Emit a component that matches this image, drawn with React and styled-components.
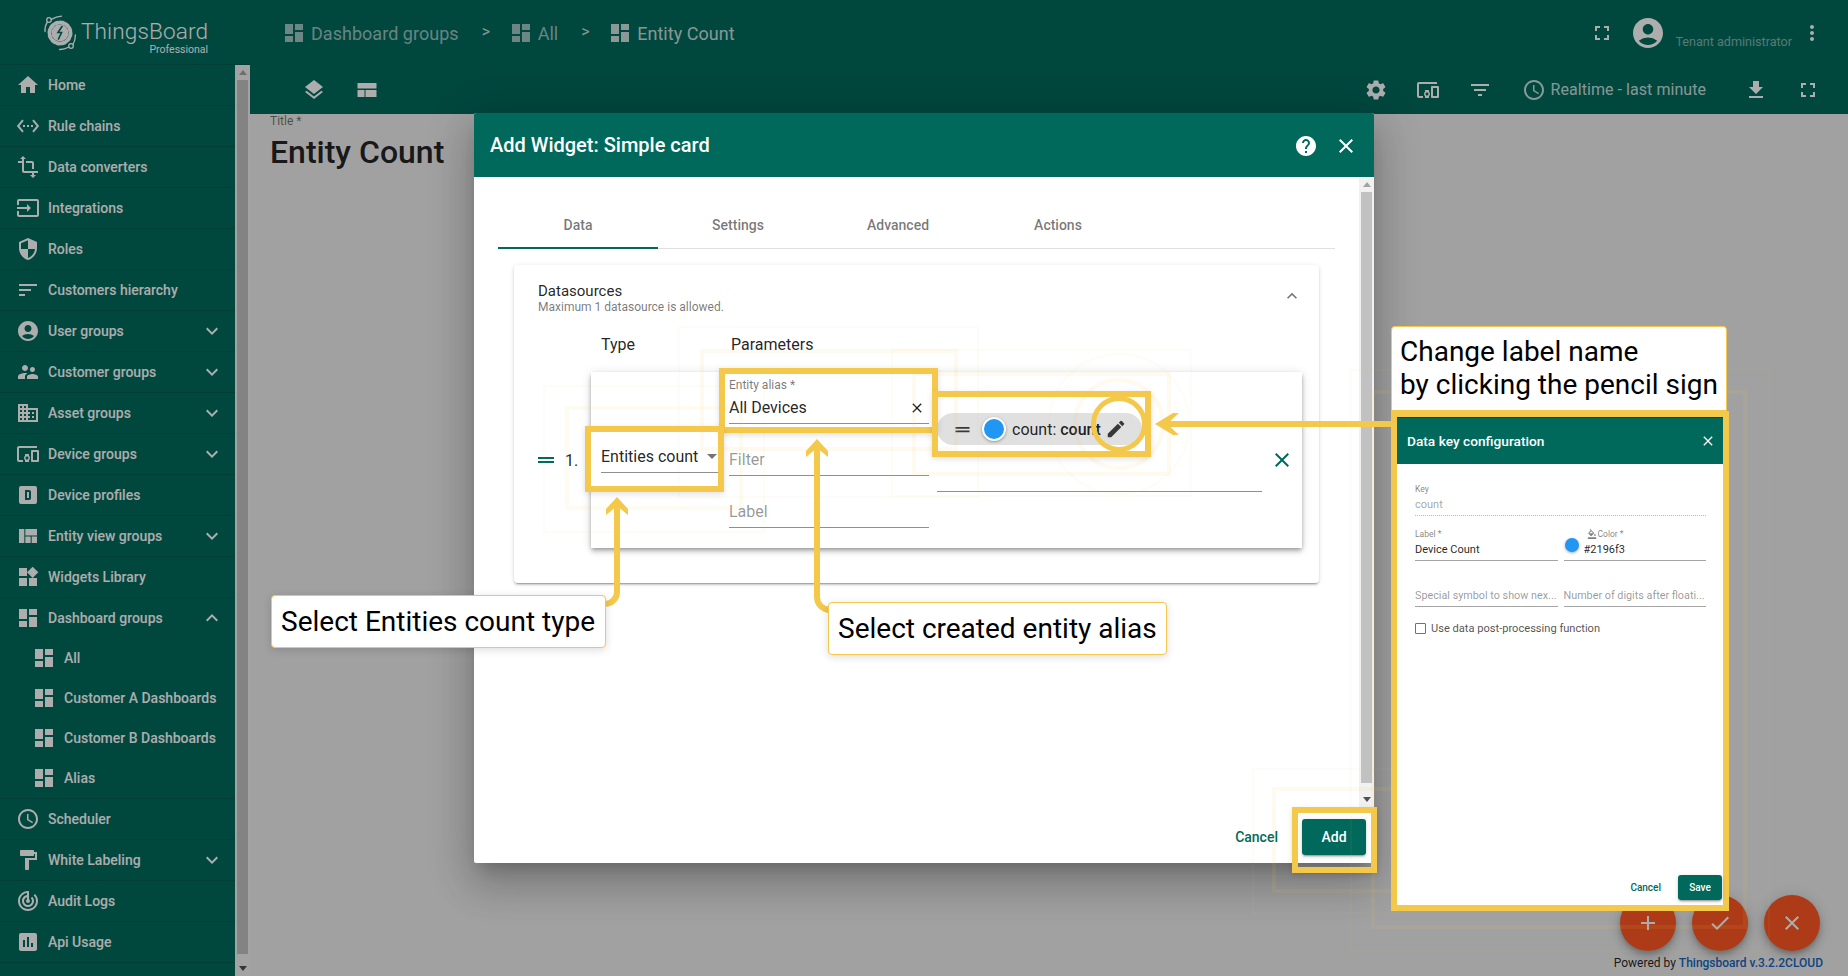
import React from "react";
import styled, { createGlobalStyle } from "styled-components";
import {
  MdHome, MdSettingsEthernet, MdTransform, MdInput, MdSecurity, MdSort, MdAccountCircle, MdSupervisorAccount,
  MdDomain, MdDevicesOther, MdViewQuilt, MdWidgets, MdDashboard, MdAccessTime, MdFormatPaint, MdTrackChanges,
  MdInsertChart, MdExpandMore, MdExpandLess, MdLayers, MdSettings, MdFilterList, MdFileDownload, MdFullscreen,
  MdMoreVert, MdHelp, MdClose, MdDragHandle, MdEdit, MdArrowDropDown, MdAdd, MdCheck, MdFormatColorFill,
} from "react-icons/md";

const TEAL = "#00695c";
const YELLOW = "#f4c84b";

const Global = createGlobalStyle`
  html, body { margin: 0; padding: 0; height: 976px; overflow: hidden; background: #eee; }
  body { font-family: Roboto, "Liberation Sans", sans-serif; color: rgba(0,0,0,.87); }
  * { box-sizing: border-box; }
`;

const Page = styled.div`
  position: relative; display: flex; width: 1848px; height: 976px; overflow: hidden; background: #eeeeee;
`;

/* ---------- sidebar ---------- */
const Sidebar = styled.aside`
  display: flex; flex-direction: column; width: 250px; flex: none; background: ${TEAL};
`;
const LogoBar = styled.div`
  display: flex; height: 65px; flex: none; padding: 10px 0 0 36px; border-bottom: 1px solid rgba(0,0,0,.12);
`;
const LogoText = styled.div`
  display: flex; flex-direction: column; align-items: flex-end; margin-left: -1px; color: #fff;
`;
const LogoName = styled.span`
  font-size: 22.6px; font-weight: 300; line-height: 28px; margin-top: 8px; letter-spacing: .1px;
`;
const LogoSub = styled.span`
  font-size: 10.5px; font-weight: 400; line-height: 11px; margin-top: -2px;
`;
const SideBody = styled.div`
  display: flex; flex: 1; min-height: 0;
`;
const Nav = styled.nav`
  display: flex; flex-direction: column; flex: 1; min-width: 0;
`;
const NavRow = styled.div`
  display: flex; align-items: center; flex: none; height: ${p => (p.$open ? 40 : 41)}px; padding: 0 11px 0 16px; color: #fff;
  font-size: 14px; font-weight: 500; border-bottom: ${p => (p.$open ? "none" : "1px solid rgba(0,0,0,.12)")};
  svg { flex: none; }
`;
const NavLabel = styled.span`
  margin-left: 8px; flex: 1; white-space: nowrap;
`;
const SubRow = styled.div`
  display: flex; align-items: center; flex: none; height: 40px; padding-left: 32px; color: #fff;
  font-size: 14px; font-weight: 500; white-space: nowrap;
`;
const SubGroup = styled.div`
  display: flex; flex-direction: column; border-bottom: 1px solid rgba(0,0,0,.12);
`;
const Scrollbar = styled.div`
  display: flex; flex-direction: column; width: ${p => p.$w || 15}px; flex: none; background: #f1f1f1;
`;
const ScrollArrow = styled.div`
  display: flex; align-items: center; justify-content: center; height: 15px; flex: none;
  &::before {
    content: ""; width: 0; height: 0; border-left: 4px solid transparent; border-right: 4px solid transparent;
    ${p => (p.$down ? "border-top: 5px solid #505050;" : "border-bottom: 5px solid #a3a3a3;")}
  }
`;
const ScrollThumb = styled.div`
  flex: 1; margin: 0 2px ${p => p.$gap}px; background: #c1c1c1;
`;

/* ---------- main ---------- */
const Main = styled.main`
  display: flex; flex-direction: column; flex: 1; min-width: 0;
`;
const TopBar = styled.header`
  display: flex; flex-direction: column; height: 114px; flex: none; background: ${TEAL}; color: #fff;
`;
const TopRow = styled.div`
  display: flex; align-items: center; height: 64px; flex: none; padding: 2px 24px 0 32px;
`;
const SubBar = styled.div`
  display: flex; align-items: center; height: 50px; flex: none; padding: 1px 28px 0 52px;
`;
const Crumb = styled.div`
  display: flex; align-items: center; font-size: 18px; gap: 5px; letter-spacing: .03px;
  color: rgba(255,255,255,${p => (p.$current ? ".8" : ".62")}); white-space: nowrap;
`;
const CrumbSep = styled.span`
  font-size: 16px; width: 50px; padding-left: 23px; margin-top: -3px; color: rgba(255,255,255,.8);
`;
const Spacer = styled.div`
  flex: 1;
`;
const TenantName = styled.span`
  font-size: 12.6px; margin: 17px 8px 0 9px; color: rgba(255,255,255,.5); white-space: nowrap;
`;
const IconGap = styled.div`
  display: flex; align-items: center; gap: ${p => p.$gap}px; margin: ${p => p.$top || 0}px 0 0 ${p => p.$left || 0}px;
`;
const Realtime = styled.div`
  display: flex; align-items: center; gap: 5px; font-size: 16px; letter-spacing: .05px; color: rgba(255,255,255,.8); white-space: nowrap;
  margin: 0 38px 0 30px;
`;
const Content = styled.section`
  flex: 1; padding: 0 20px; position: relative;
`;
const TitleLabel = styled.div`
  font-size: 12px; line-height: 14px; color: rgba(0,0,0,.54);
`;
const TitleValue = styled.div`
  font-size: 32px; font-weight: 500; line-height: 38px; margin-top: 5px;
`;
const FabRow = styled.div`
  position: absolute; right: 28px; top: 781px; display: flex; gap: 16px;
`;
const Fab = styled.div`
  display: flex; align-items: center; justify-content: center; width: 56px; height: 56px; border-radius: 50%;
  background: #ff5722; color: #fff; box-shadow: 0 3px 5px -1px rgba(0,0,0,.2), 0 6px 10px rgba(0,0,0,.14), 0 1px 18px rgba(0,0,0,.12);
`;
const Powered = styled.div`
  position: absolute; right: 25px; top: 842px; font-size: 12px; white-space: nowrap;
`;
const PoweredLink = styled.span`
  color: #1565c0; font-weight: 500;
`;
const Backdrop = styled.div`
  position: absolute; inset: 0; background: rgba(0,0,0,.32);
`;

/* ---------- widget dialog ---------- */
const Modal = styled.div`
  position: absolute; left: 474px; top: 113px; width: 900px; height: 750px; display: flex; flex-direction: column;
  background: #fff; border-radius: 2px;
  box-shadow: 0 11px 15px -7px rgba(0,0,0,.2), 0 24px 38px 3px rgba(0,0,0,.14), 0 9px 46px 8px rgba(0,0,0,.12);
`;
const ModalHead = styled.div`
  display: flex; align-items: center; height: 64px; flex: none; padding: 0 16px; background: ${TEAL}; color: #fff;
  border-radius: 2px 2px 0 0;
`;
const ModalTitle = styled.h2`
  margin: 0; font-size: 20px; font-weight: 500; flex: 1;
`;
const ModalMiddle = styled.div`
  display: flex; height: 630px; flex: none;
`;
const ModalBody = styled.div`
  flex: 1; min-width: 0; padding: 24px 24px 0;
`;
const Tabs = styled.div`
  display: flex; height: 48px; border-bottom: 1px solid #e0e0e0;
`;
const Tab = styled.div`
  display: flex; align-items: center; justify-content: center; width: 160px; height: 48px; font-size: 14px; font-weight: 500;
  color: rgba(0,0,0,.54); box-shadow: ${p => (p.$active ? `inset 0 -2px 0 ${TEAL}` : "none")};
`;
const Card = styled.div`
  position: relative; height: 318px; margin: 16px 16px 0; padding: 17px 17px 0 24px; border-radius: 4px;
  box-shadow: 0 3px 1px -2px rgba(0,0,0,.2), 0 2px 2px rgba(0,0,0,.14), 0 1px 5px rgba(0,0,0,.12);
`;
const CardHead = styled.div`
  display: flex; justify-content: space-between;
`;
const CardTitle = styled.div`
  font-size: 15px; line-height: 18px;
`;
const CardSub = styled.div`
  font-size: 12px; line-height: 14px; color: rgba(0,0,0,.54);
`;
const Collapse = styled.div`
  color: rgba(0,0,0,.54); margin: 4px 0 0 0; height: 20px;
`;
const ColHeads = styled.div`
  display: flex; font-size: 16px; line-height: 20px; margin-top: 21px; padding-left: 63px;
`;
const ColHead = styled.div`
  width: ${p => p.$w}px;
`;
const SourceLine = styled.div`
  display: flex; align-items: center; margin-top: 17px;
`;
const Handle = styled.div`
  display: flex; width: 31px; margin-left: -4px; color: ${TEAL}; flex: none;
`;
const SourceIndex = styled.div`
  font-size: 16px; width: 26px; flex: none;
`;
const SourceCard = styled.div`
  display: flex; align-items: flex-start; height: 176px; flex: 1; min-width: 0; padding: 0 8px 0 10px; position: relative;
  box-shadow: 0 2px 4px -1px rgba(0,0,0,.3), 0 4px 5px rgba(0,0,0,.14), 0 1px 10px rgba(0,0,0,.12);
`;
const TypeCol = styled.div`
  width: 117px; flex: none; margin: 49px 11px 0 0;
`;
const ParamCol = styled.div`
  width: 200px; flex: none; display: flex; flex-direction: column;
`;
const Field = styled.div`
  position: relative; height: 52px; display: flex; flex-direction: column; justify-content: flex-end;
  border-bottom: 1px solid #8f8f8f; padding-bottom: 4px; font-size: 16px; line-height: 22px;
`;
const FieldLabel = styled.div`
  font-size: 12px; line-height: 14px; color: rgba(0,0,0,.54); margin-bottom: 5px;
`;
const Placeholder = styled.div`
  color: rgba(0,0,0,.42);
`;
const SelectCaret = styled.div`
  position: absolute; right: -6px; top: 23px; display: flex; color: rgba(0,0,0,.54);
`;
const FieldClear = styled.div`
  position: absolute; right: 4px; top: 28px; display: flex;
`;
const KeysCol = styled.div`
  width: 325px; height: 120px; margin-left: 8px; flex: none; border-bottom: 1px solid #8f8f8f; padding-top: 41px;
`;
const Chip = styled.div`
  display: flex; align-items: center; width: 205px; height: 32px; border-radius: 16px; background: #e0e0e0; padding-left: 15px;
  color: rgba(0,0,0,.87); font-size: 16px; white-space: nowrap;
  svg { flex: none; }
`;
const ColorDot = styled.div`
  width: ${p => p.$s}px; height: ${p => p.$s}px; border-radius: 50%; background: #2196f3; flex: none;
  border: ${p => p.$b}px solid #fff; box-shadow: 0 1px 3px rgba(0,0,0,.35);
`;
const ChipDot = styled(ColorDot)`
  margin-left: 9px;
`;
const ChipText = styled.span`
  margin-left: 6px; width: 93px;
  b { font-weight: 500; }
`;
const RemoveBtn = styled.div`
  display: flex; align-items: center; height: 100%; margin-left: 8px; color: ${TEAL}; align-self: center;
`;
const ModalFoot = styled.div`
  display: flex; align-items: center; justify-content: flex-end; flex: 1; padding: 4px 8px 0 0; gap: 24px;
`;
const TextBtn = styled.div`
  color: ${TEAL}; font-size: ${p => p.$fs}px; font-weight: 500;
`;
const RaisedBtn = styled.div`
  display: flex; align-items: center; justify-content: center; width: ${p => p.$w}px; height: ${p => p.$h}px; border-radius: 3px;
  background: ${TEAL}; color: #fff; font-size: ${p => p.$fs}px; font-weight: 500;
  box-shadow: 0 3px 1px -2px rgba(0,0,0,.2), 0 2px 2px rgba(0,0,0,.14), 0 1px 5px rgba(0,0,0,.12);
`;

/* ---------- annotations ---------- */
const Highlight = styled.div`
  position: absolute; left: ${p => p.$x}px; top: ${p => p.$y}px; width: ${p => p.$w}px; height: ${p => p.$h}px;
  border: 6px solid ${YELLOW}; box-shadow: 0 2px 6px rgba(0,0,0,.12);
`;
const Ring = styled.div`
  position: absolute; left: 1091px; top: 396px; width: 56px; height: 56px; border-radius: 50%; border: 5px solid ${YELLOW};
`;
const Ghost = styled.div`
  position: absolute; left: ${p => p.$x}px; top: ${p => p.$y}px; width: ${p => p.$w}px; height: ${p => p.$h}px;
  border: ${p => p.$t}px solid ${YELLOW}; opacity: ${p => p.$o}; border-radius: ${p => (p.$round ? "50%" : "0")};
`;
const Callout = styled.div`
  position: absolute; left: ${p => p.$x}px; top: ${p => p.$y}px; width: ${p => p.$w}px; height: 53px; display: flex; align-items: center;
  padding-left: 9px; background: #fff; border: 1px solid ${YELLOW}; border-radius: 4px; font-size: 28px; color: #000; white-space: nowrap;
  box-shadow: 0 2px 8px rgba(0,0,0,.14);
`;
const Arrows = styled.svg`
  position: absolute; left: 0; top: 0; width: 1848px; height: 976px; pointer-events: none;
`;
const RightPanel = styled.div`
  position: absolute; left: 1391px; top: 326px; width: 338px; display: flex; flex-direction: column;
`;
const PanelNote = styled.div`
  width: 336px; height: 85px; padding: 8px 8px 0; background: #fff; border: 1px solid ${YELLOW}; border-radius: 4px 4px 0 0;
  font-size: 28px; line-height: 33px; color: #000; white-space: nowrap;
`;
const PanelFrame = styled.div`
  height: 500px; border: 6px solid ${YELLOW}; background: #fff; display: flex; flex-direction: column;
`;
const KeyHead = styled.div`
  display: flex; align-items: center; justify-content: space-between; height: 47px; flex: none; padding: 0 7px 0 10px;
  background: ${TEAL}; color: #fff; font-size: 13.7px; font-weight: 500; border-top: 1px solid #00493f;
`;
const KeyBody = styled.div`
  display: flex; flex-direction: column; flex: 1; padding: 0 17px 0 18px;
`;
const MiniField = styled.div`
  position: relative; flex: none; min-width: 0; height: ${p => p.$h}px; display: flex; flex-direction: column; justify-content: flex-end;
  padding-bottom: 3px; font-size: 11px; line-height: 14px; border-bottom: 1px ${p => (p.$dotted ? "dotted #b8b8b8" : "solid #a5a5a5")};
  color: ${p => (p.$muted ? "rgba(0,0,0,.38)" : "rgba(0,0,0,.87)")}; white-space: nowrap;
`;
const MiniLabel = styled.div`
  font-size: 8.5px; line-height: 10px; color: rgba(0,0,0,.5); margin-bottom: 4px; display: flex; align-items: center; gap: 1px;
  padding-left: ${p => p.$indent || 0}px;
`;
const MiniHint = styled.div`
  font-size: 10.8px; color: rgba(0,0,0,.42);
`;
const MiniRow = styled.div`
  display: flex; gap: 6px;
  & > * { flex: 1; }
`;
const ColorValue = styled.div`
  padding-left: 20px;
`;
const ColorFieldDot = styled.div`
  position: absolute; left: 1px; top: 22px;
`;
const CheckRow = styled.div`
  display: flex; align-items: center; gap: 5px; margin-top: 15px; font-size: 11.1px; color: rgba(0,0,0,.7); white-space: nowrap;
`;
const CheckBox = styled.div`
  width: 11px; height: 11px; border: 1px solid rgba(0,0,0,.55); border-radius: 1px; flex: none;
`;
const KeyFoot = styled.div`
  display: flex; align-items: center; justify-content: flex-end; gap: 17px; margin: auto -16px 5px 0;
`;

/* ---------- drawings ---------- */
const Logo = () => (
  <svg width="46" height="46" viewBox="0 0 46 46" fill="none" stroke="#fff" strokeLinecap="round">
    <circle cx="24" cy="23" r="10.5" stroke="#fff" strokeWidth="4" strokeDasharray="3 2.5" />
    <circle cx="24" cy="23" r="8.5" fill="#fff" stroke="none" />
    <path d="M26 16.5l-4 6h3.5l-3 6.5" stroke={TEAL} strokeWidth="1.6" />
    <circle cx="13" cy="10" r="2.3" strokeWidth="1.3" />
    <path d="M15.3 9.4C19 7.5 22 6.6 25.5 6.2M11.4 11.8C9.7 14.5 8.7 18 9 21.5" strokeWidth="1.3" />
    <circle cx="35" cy="36" r="2.3" strokeWidth="1.3" />
    <path d="M32.8 37C29.5 39 27 39.6 23.5 39.5M37 34.5C38.6 31.7 39.4 29 39.4 25" strokeWidth="1.3" />
  </svg>
);
const DeviceProfileIcon = () => (
  <svg width="24" height="24" viewBox="0 0 24 24" fill="currentColor">
    <path fillRule="evenodd" d="M5 3h14a2 2 0 0 1 2 2v14a2 2 0 0 1-2 2H5a2 2 0 0 1-2-2V5a2 2 0 0 1 2-2zm4 4v10h4a2 2 0 0 0 2-2V9a2 2 0 0 0-2-2H9zm2 2h2v6h-2V9z" />
  </svg>
);
const WebBlocks = () => (
  <svg width="24" height="24" viewBox="0 0 24 24" fill="#fff">
    <path d="M2.5 5h19v5.6h-19zM2.5 12h7v7h-7zM10.5 12h11v7h-11z" />
  </svg>
);

const menuA = [
  [MdHome, "Home"], [MdSettingsEthernet, "Rule chains"], [MdTransform, "Data converters"], [MdInput, "Integrations"],
  [MdSecurity, "Roles"], [MdSort, "Customers hierarchy"], [MdAccountCircle, "User groups", 1], [MdSupervisorAccount, "Customer groups", 1],
  [MdDomain, "Asset groups", 1], [MdDevicesOther, "Device groups", 1], [DeviceProfileIcon, "Device profiles"],
  [MdViewQuilt, "Entity view groups", 1], [MdWidgets, "Widgets Library"],
];
const menuB = [
  [MdAccessTime, "Scheduler"], [MdFormatPaint, "White Labeling", 1], [MdTrackChanges, "Audit Logs"], [MdInsertChart, "Api Usage"],
];
const subItems = ["All", "Customer A Dashboards", "Customer B Dashboards", "Alias"];

const ghosts = [
  [543, 385, 222, 148, 2, .05], [565, 406, 178, 104, 4, .08],
  [700, 349, 258, 102, 4, .09], [678, 326, 301, 172, 2, .05],
  [912, 372, 259, 104, 4, .09], [891, 349, 301, 148, 2, .05],
  [1272, 787, 125, 106, 4, .09], [1252, 768, 150, 146, 2, .05],
  [1371, 390, 376, 539, 4, .09], [1350, 369, 420, 583, 2, .05],
];

function Row({ icon: Icon, label, more }) {
  return (
    <NavRow>
      <Icon size={24} />
      <NavLabel>{label}</NavLabel>
      {more ? <MdExpandMore size={24} /> : null}
    </NavRow>
  );
}

export default function App() {
  return (
    <Page>
      <Global />
      <Sidebar>
        <LogoBar>
          <Logo />
          <LogoText>
            <LogoName>ThingsBoard</LogoName>
            <LogoSub>Professional</LogoSub>
          </LogoText>
        </LogoBar>
        <SideBody>
          <Nav>
            {menuA.map(([i, l, m]) => <Row key={l} icon={i} label={l} more={m} />)}
            <NavRow $open>
              <MdDashboard size={24} />
              <NavLabel>Dashboard groups</NavLabel>
              <MdExpandLess size={24} />
            </NavRow>
            <SubGroup>
              {subItems.map(s => (
                <SubRow key={s}>
                  <MdDashboard size={24} />
                  <NavLabel>{s}</NavLabel>
                </SubRow>
              ))}
            </SubGroup>
            {menuB.map(([i, l, m]) => <Row key={l} icon={i} label={l} more={m} />)}
          </Nav>
          <Scrollbar>
            <ScrollArrow />
            <ScrollThumb $gap={7} />
            <ScrollArrow $down />
          </Scrollbar>
        </SideBody>
      </Sidebar>

      <Main>
        <TopBar>
          <TopRow>
            <Crumb><MdDashboard size={24} />Dashboard groups</Crumb>
            <CrumbSep>&gt;</CrumbSep>
            <Crumb><MdDashboard size={24} />All</Crumb>
            <CrumbSep>&gt;</CrumbSep>
            <Crumb $current><MdDashboard size={24} />Entity Count</Crumb>
            <Spacer />
            <MdFullscreen size={24} />
            <IconGap $gap={0} $left={16}>
              <MdAccountCircle size={36} />
              <TenantName>Tenant administrator</TenantName>
            </IconGap>
            <MdMoreVert size={24} />
          </TopRow>
          <SubBar>
            <IconGap $gap={29}>
              <MdLayers size={24} />
              <WebBlocks />
            </IconGap>
            <Spacer />
            <IconGap $gap={28}>
              <MdSettings size={24} />
              <MdDevicesOther size={24} />
              <MdFilterList size={24} />
            </IconGap>
            <Realtime><MdAccessTime size={24} />Realtime - last minute</Realtime>
            <IconGap $gap={28}>
              <MdFileDownload size={24} />
              <MdFullscreen size={24} />
            </IconGap>
          </SubBar>
        </TopBar>
        <Content>
          <TitleLabel>Title *</TitleLabel>
          <TitleValue>Entity Count</TitleValue>
          <FabRow>
            <Fab><MdAdd size={24} /></Fab>
            <Fab><MdCheck size={24} /></Fab>
            <Fab><MdClose size={24} /></Fab>
          </FabRow>
          <Powered>Powered by <PoweredLink>Thingsboard v.3.2.2CLOUD</PoweredLink></Powered>
        </Content>
      </Main>

      <Backdrop />

      <Modal>
        <ModalHead>
          <ModalTitle>Add Widget: Simple card</ModalTitle>
          <IconGap $gap={16} $top={2}>
            <MdHelp size={24} />
            <MdClose size={24} />
          </IconGap>
        </ModalHead>
        <ModalMiddle>
          <ModalBody>
            <Tabs>
              <Tab $active>Data</Tab>
              <Tab>Settings</Tab>
              <Tab>Advanced</Tab>
              <Tab>Actions</Tab>
            </Tabs>
            <Card>
              <CardHead>
                <div>
                  <CardTitle>Datasources</CardTitle>
                  <CardSub>Maximum 1 datasource is allowed.</CardSub>
                </div>
                <Collapse><MdExpandLess size={20} /></Collapse>
              </CardHead>
              <ColHeads>
                <ColHead $w={130}>Type</ColHead>
                <ColHead $w={200}>Parameters</ColHead>
              </ColHeads>
              <SourceLine>
                <Handle><MdDragHandle size={24} /></Handle>
                <SourceIndex>1.</SourceIndex>
                <SourceCard>
                  <TypeCol>
                    <Field>
                      Entities count
                      <SelectCaret><MdArrowDropDown size={24} /></SelectCaret>
                    </Field>
                  </TypeCol>
                  <ParamCol>
                    <Field>
                      <FieldLabel>Entity alias *</FieldLabel>
                      All Devices
                      <FieldClear><MdClose size={16} /></FieldClear>
                    </Field>
                    <Field><Placeholder>Filter</Placeholder></Field>
                    <Field><Placeholder>Label</Placeholder></Field>
                  </ParamCol>
                  <KeysCol>
                    <Chip>
                      <MdDragHandle size={21} color="rgba(0,0,0,.75)" />
                      <ChipDot $s={24} $b={2} />
                      <ChipText>count: <b>count</b></ChipText>
                      <MdEdit size={22} color="rgba(0,0,0,.75)" />
                    </Chip>
                  </KeysCol>
                  <RemoveBtn><MdClose size={24} /></RemoveBtn>
                </SourceCard>
              </SourceLine>
            </Card>
          </ModalBody>
          <Scrollbar>
            <ScrollArrow />
            <ScrollThumb $gap={9} />
            <ScrollArrow $down />
          </Scrollbar>
        </ModalMiddle>
        <ModalFoot>
          <TextBtn $fs={14}>Cancel</TextBtn>
          <RaisedBtn $w={64} $h={36} $fs={14}>Add</RaisedBtn>
        </ModalFoot>
      </Modal>

      {ghosts.map(([x, y, w, h, t, o]) => <Ghost key={`${x}${y}`} $x={x} $y={y} $w={w} $h={h} $t={t} $o={o} />)}
      <Ghost $x={1073} $y={378} $w={92} $h={92} $t={4} $o={.09} $round />
      <Ghost $x={1048} $y={353} $w={142} $h={142} $t={2} $o={.05} $round />

      <Highlight $x={719} $y={368} $w={219} $h={65} />
      <Highlight $x={585} $y={426} $w={139} $h={66} />
      <Highlight $x={932} $y={391} $w={219} $h={66} />
      <Highlight $x={1292} $y={807} $w={85} $h={66} />
      <Ring />

      <Arrows viewBox="0 0 1848 976" fill="none">
        <path d="M617 505V592a12 12 0 0 1-12 12h-2M817 447V597a13 13 0 0 0 13 13h3M1163 424H1392" stroke={YELLOW} strokeWidth="6" />
        <path fill={YELLOW} d="M617 497l11 12v6l-11-9-11 9v-6zM817 439l11 12v6l-11-9-11 9v-6zM1155 424l18-11h6l-12 11 12 11h-6z" />
      </Arrows>

      <Callout $x={271} $y={595} $w={335}>Select Entities count type</Callout>
      <Callout $x={828} $y={602} $w={339}>Select created entity alias</Callout>

      <RightPanel>
        <PanelNote>Change label name<br />by clicking the pencil sign</PanelNote>
        <PanelFrame>
          <KeyHead>Data key configuration<MdClose size={16} /></KeyHead>
          <KeyBody>
            <MiniField $h={52} $dotted $muted>
              <MiniLabel>Key</MiniLabel>
              count
            </MiniField>
            <MiniRow>
              <MiniField $h={45}>
                <MiniLabel>Label *</MiniLabel>
                Device Count
              </MiniField>
              <MiniField $h={45}>
                <ColorFieldDot><ColorDot $s={14} $b={0} /></ColorFieldDot>
                <MiniLabel $indent={23}><MdFormatColorFill size={10} />Color *</MiniLabel>
                <ColorValue>#2196f3</ColorValue>
              </MiniField>
            </MiniRow>
            <MiniRow>
              <MiniField $h={46}><MiniHint>Special symbol to show nex...</MiniHint></MiniField>
              <MiniField $h={46}><MiniHint>Number of digits after floati...</MiniHint></MiniField>
            </MiniRow>
            <CheckRow><CheckBox />Use data post-processing function</CheckRow>
            <KeyFoot>
              <TextBtn $fs={10}>Cancel</TextBtn>
              <RaisedBtn $w={44} $h={25} $fs={10}>Save</RaisedBtn>
            </KeyFoot>
          </KeyBody>
        </PanelFrame>
      </RightPanel>
    </Page>
  );
}
